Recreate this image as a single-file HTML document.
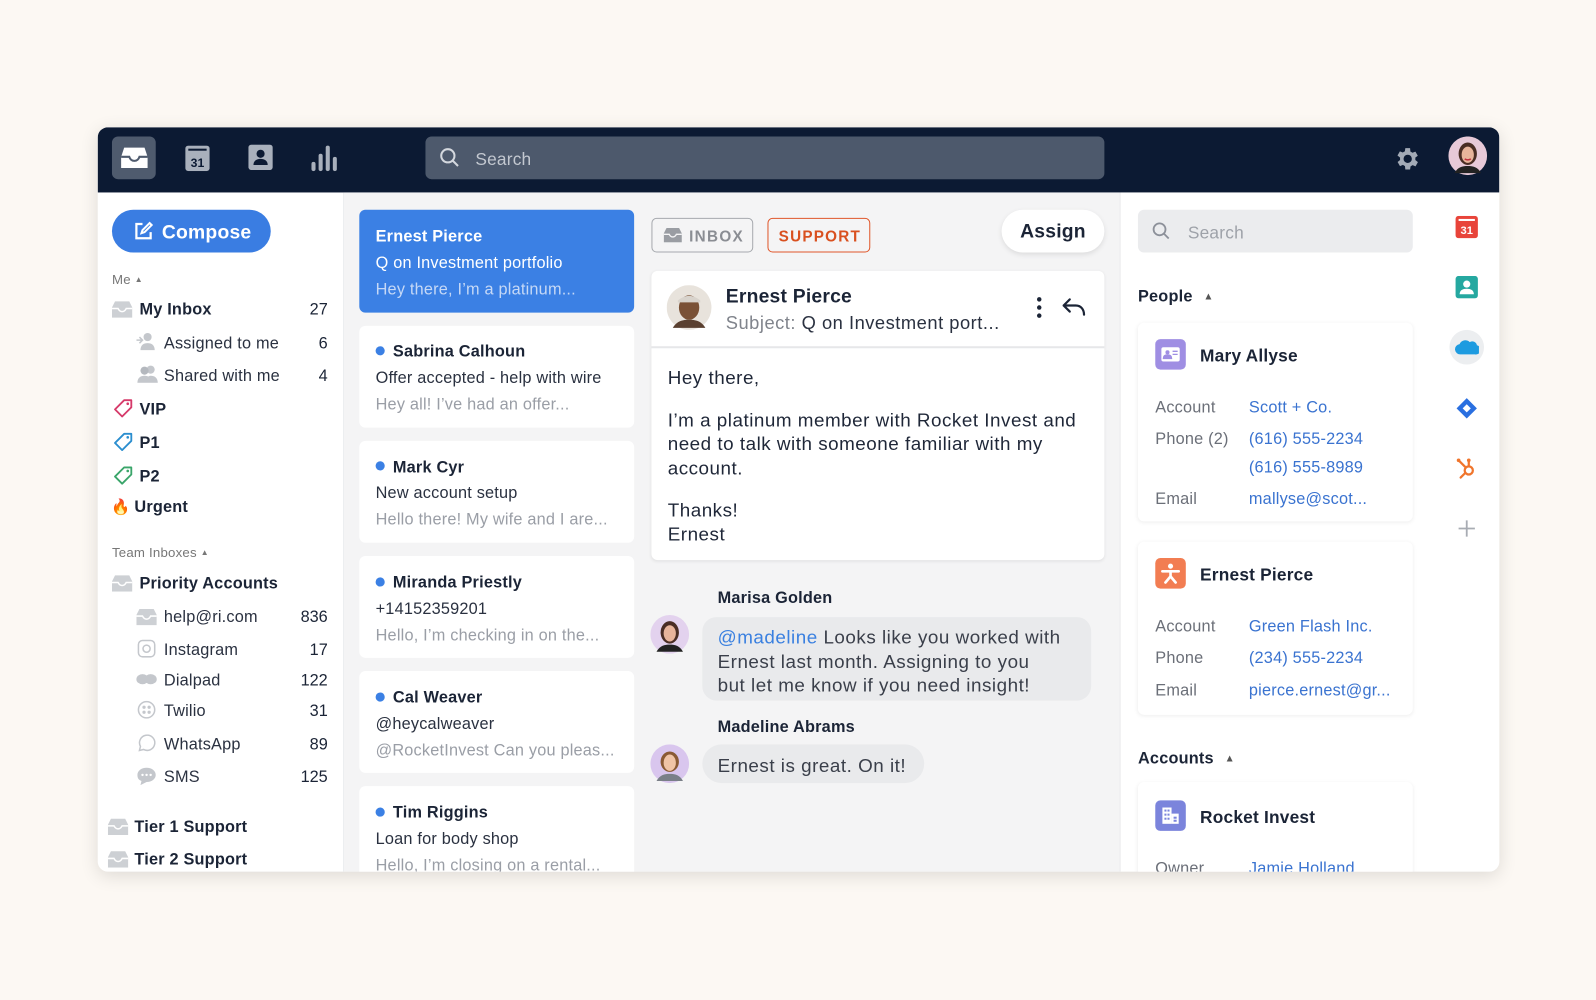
<!DOCTYPE html>
<html><head><meta charset="utf-8"><style>
*{margin:0;padding:0;box-sizing:border-box}
html,body{width:1596px;height:1000px;overflow:hidden;background:#fcf8f3;font-family:"Liberation Sans",Arial,sans-serif;color:#1b2436}
#s{position:absolute;left:0;top:0;width:1568px;height:982px;transform:scale(1.01786,1.0183);transform-origin:0 0}
.a{position:absolute}
.t{position:absolute;white-space:nowrap;line-height:20px;margin-top:2px;letter-spacing:.2px}
.b{font-weight:bold}
#app{position:absolute;left:96px;top:125px;width:1377px;height:731px;border-radius:10px;overflow:hidden;background:#fff;box-shadow:0 4px 18px rgba(0,0,0,.12)}
.card{position:absolute;background:#fff;border-radius:6px}
.cnt{position:absolute;width:60px;text-align:right;white-space:nowrap;line-height:20px;font-size:16px;margin-top:2px}
.lbl{color:#6b6f78;font-size:16px}
.lnk{color:#3a73d0;font-size:16px}
.big{letter-spacing:.5px}
</style></head><body><div id="s">
<div id="app">
<div class="a" style="left:0;top:0;width:1377px;height:64px;background:#0c1a33"></div>
<div class="a" style="left:14px;top:9px;width:43px;height:42px;background:#4f5b6e;border-radius:6px"></div>
<svg class="a" style="left:22px;top:17px" width="28" height="26" viewBox="0 0 28 26"><path d="M4 3h20l3 9v11H1V12z" fill="#fff"/><path d="M1 12h8c1 3 3 4 5 4s4-1 5-4h8" fill="none" stroke="#4f5b6e" stroke-width="2"/></svg>
<svg class="a" style="left:86px;top:18px" width="24" height="25" viewBox="0 0 24 25"><rect x="0" y="0" width="24" height="25" rx="3" fill="#a9b0bc"/><rect x="3" y="3" width="18" height="2" fill="#0c1a33"/><text x="12" y="21" font-size="12" font-weight="bold" text-anchor="middle" fill="#0c1a33" font-family="Liberation Sans">31</text></svg>
<svg class="a" style="left:148px;top:17px" width="24" height="25" viewBox="0 0 24 25"><rect width="24" height="25" rx="3" fill="#a9b0bc"/><circle cx="12" cy="9" r="4" fill="#0c1a33"/><path d="M5 20c0-4 3-6 7-6s7 2 7 6z" fill="#0c1a33"/></svg>
<svg class="a" style="left:209px;top:16px" width="26" height="28" viewBox="0 0 26 28"><g fill="#a9b0bc"><rect x="1" y="18" width="4" height="9" rx="2"/><rect x="8" y="10" width="4" height="17" rx="2"/><rect x="15" y="2" width="4" height="25" rx="2"/><rect x="22" y="13" width="4" height="14" rx="2"/></g></svg>
<div class="a" style="left:322px;top:9px;width:667px;height:42px;background:#4d596c;border-radius:6px"></div>
<svg class="a" style="left:336px;top:20px" width="20" height="20" viewBox="0 0 20 20"><circle cx="8" cy="8" r="6.5" fill="none" stroke="#d4d8de" stroke-width="2"/><path d="M13 13l5 5" stroke="#d4d8de" stroke-width="2"/></svg>
<div class="t" style="left:371px;top:20px;font-size:17px;color:#c3c8d0">Search</div>
<svg class="a" style="left:1273px;top:17px" width="28" height="28" viewBox="0 0 24 24"><path fill="#a3aab6" d="M19.4 13a7.5 7.5 0 000-2l2.1-1.6-2-3.5-2.5 1a7 7 0 00-1.7-1L15 3h-4l-.4 2.7a7 7 0 00-1.7 1l-2.5-1-2 3.5L6.6 11a7.5 7.5 0 000 2l-2.1 1.6 2 3.5 2.5-1a7 7 0 001.7 1L11 21h4l.4-2.7a7 7 0 001.7-1l2.5 1 2-3.5zM13 15.5a3.5 3.5 0 110-7 3.5 3.5 0 010 7z" transform="translate(-1 0)"/></svg>
<svg class="a" style="left:1327px;top:9px" width="38" height="38" viewBox="0 0 38 38"><circle cx="19" cy="19" r="19" fill="#e7c9d8"/><ellipse cx="19" cy="17" rx="9" ry="11" fill="#4a2d24"/><ellipse cx="19" cy="18" rx="6" ry="8" fill="#e8b49b"/><path d="M6 36c3-6 8-7 13-7s10 1 13 7z" fill="#222"/><path d="M16 22q3 2 6 0" stroke="#c03040" stroke-width="1.5" fill="none"/></svg>

<div class="a" style="left:241px;top:64px;width:1px;height:667px;background:#eceef0"></div>
<div class="a" style="left:14px;top:81px;width:156px;height:42px;background:#3a7de2;border-radius:21px"></div>
<svg class="a" style="left:35px;top:92px" width="20" height="20" viewBox="0 0 20 20"><path d="M9 3H3v14h14v-6" fill="none" stroke="#fff" stroke-width="2.2"/><path d="M8 12l1-3 7-7 2 2-7 7z" fill="none" stroke="#fff" stroke-width="2"/></svg>
<div class="t b" style="left:63px;top:92px;font-size:19px;color:#fff">Compose</div>
<div class="t" style="left:14px;top:138px;font-size:13px;color:#777">Me <span style="font-size:8px;vertical-align:2px">▲</span></div>
<svg class="a" style="left:14px;top:170px" width="20" height="17" viewBox="0 0 20 17"><path d="M3 1h14l3 6v10H0V7z" fill="#cdd0d4"/><path d="M0 8h6c1 2 2 3 4 3s3-1 4-3h6" fill="none" stroke="#fff" stroke-width="1.5"/></svg>
<div class="t b" style="left:41px;top:168px;font-size:16px">My Inbox</div><div class="cnt" style="left:166px;top:168px">27</div>
<svg class="a" style="left:38px;top:201px" width="20" height="18" viewBox="0 0 20 18"><circle cx="11" cy="5" r="4" fill="#c4c7cc"/><path d="M4 18c0-5 3-7 7-7s7 2 7 7z" fill="#c4c7cc"/><path d="M0 8h5M3 5l3 3-3 3" stroke="#c4c7cc" fill="none" stroke-width="1.5"/></svg>
<div class="t" style="left:65px;top:201px;font-size:16px;color:#2a3140">Assigned to me</div><div class="cnt" style="left:166px;top:201px">6</div>
<svg class="a" style="left:38px;top:233px" width="22" height="18" viewBox="0 0 22 18"><circle cx="14" cy="5" r="4" fill="#c4c7cc"/><circle cx="8" cy="6" r="4" fill="#b4b8be"/><path d="M1 18c0-5 3-7 7-7s7 2 7 7zM9 18c0-5 3-7 5-7 4 0 7 2 7 7z" fill="#c4c7cc"/></svg>
<div class="t" style="left:65px;top:233px;font-size:16px;color:#2a3140">Shared with me</div><div class="cnt" style="left:166px;top:233px">4</div>
<svg class="a" style="left:15px;top:266px" width="20" height="20" viewBox="0 0 20 20"><path d="M11 2h7v7l-9 9-7-7z" fill="none" stroke="#d63a6a" stroke-width="1.8" stroke-linejoin="round"/><circle cx="14.5" cy="5.5" r="1.3" fill="#d63a6a"/></svg>
<div class="t b" style="left:41px;top:266px;font-size:16px">VIP</div>
<svg class="a" style="left:15px;top:299px" width="20" height="20" viewBox="0 0 20 20"><path d="M11 2h7v7l-9 9-7-7z" fill="none" stroke="#2b8ecf" stroke-width="1.8" stroke-linejoin="round"/><circle cx="14.5" cy="5.5" r="1.3" fill="#2b8ecf"/></svg>
<div class="t b" style="left:41px;top:299px;font-size:16px">P1</div>
<svg class="a" style="left:15px;top:332px" width="20" height="20" viewBox="0 0 20 20"><path d="M11 2h7v7l-9 9-7-7z" fill="none" stroke="#3aa56a" stroke-width="1.8" stroke-linejoin="round"/><circle cx="14.5" cy="5.5" r="1.3" fill="#3aa56a"/></svg>
<div class="t b" style="left:41px;top:332px;font-size:16px">P2</div>
<div class="t" style="left:13px;top:362px;font-size:15px;color:#f06a1a">🔥</div>
<div class="t b" style="left:36px;top:362px;font-size:16px">Urgent</div>
<div class="t" style="left:14px;top:406px;font-size:13px;color:#777">Team Inboxes <span style="font-size:8px;vertical-align:2px">▲</span></div>
<svg class="a" style="left:14px;top:439px" width="20" height="17" viewBox="0 0 20 17"><path d="M3 1h14l3 6v10H0V7z" fill="#cdd0d4"/><path d="M0 8h6c1 2 2 3 4 3s3-1 4-3h6" fill="none" stroke="#fff" stroke-width="1.5"/></svg>
<div class="t b" style="left:41px;top:437px;font-size:16px">Priority Accounts</div>
<svg class="a" style="left:38px;top:472px" width="20" height="17" viewBox="0 0 20 17"><path d="M3 1h14l3 6v10H0V7z" fill="#cdd0d4"/><path d="M0 8h6c1 2 2 3 4 3s3-1 4-3h6" fill="none" stroke="#fff" stroke-width="1.5"/></svg>
<div class="t" style="left:65px;top:470px;font-size:16px;color:#2a3140">help@ri.com</div><div class="cnt" style="left:166px;top:470px">836</div>
<svg class="a" style="left:39px;top:503px" width="18" height="18" viewBox="0 0 18 18"><rect x="1" y="1" width="16" height="16" rx="4" fill="none" stroke="#c4c7cc" stroke-width="1.5"/><circle cx="9" cy="9" r="3.5" fill="none" stroke="#c4c7cc" stroke-width="1.5"/></svg>
<div class="t" style="left:65px;top:502px;font-size:16px;color:#2a3140">Instagram</div><div class="cnt" style="left:166px;top:502px">17</div>
<svg class="a" style="left:37px;top:535px" width="22" height="14" viewBox="0 0 22 14"><ellipse cx="7" cy="7" rx="6" ry="5" fill="#c4c7cc"/><ellipse cx="15" cy="7" rx="6" ry="5" fill="#c4c7cc"/></svg>
<div class="t" style="left:65px;top:532px;font-size:16px;color:#2a3140">Dialpad</div><div class="cnt" style="left:166px;top:532px">122</div>
<svg class="a" style="left:39px;top:563px" width="18" height="18" viewBox="0 0 18 18"><circle cx="9" cy="9" r="8" fill="none" stroke="#c4c7cc" stroke-width="1.5"/><g fill="#c4c7cc"><circle cx="6.5" cy="6.5" r="1.6"/><circle cx="11.5" cy="6.5" r="1.6"/><circle cx="6.5" cy="11.5" r="1.6"/><circle cx="11.5" cy="11.5" r="1.6"/></g></svg>
<div class="t" style="left:65px;top:562px;font-size:16px;color:#2a3140">Twilio</div><div class="cnt" style="left:166px;top:562px">31</div>
<svg class="a" style="left:39px;top:596px" width="18" height="18" viewBox="0 0 18 18"><path d="M2 16l1-4a7.5 7.5 0 113 3z" fill="none" stroke="#c4c7cc" stroke-width="1.5"/></svg>
<div class="t" style="left:65px;top:595px;font-size:16px;color:#2a3140">WhatsApp</div><div class="cnt" style="left:166px;top:595px">89</div>
<svg class="a" style="left:38px;top:628px" width="20" height="18" viewBox="0 0 20 18"><path d="M10 1c5 0 9 3 9 7s-4 7-9 7l-6 3 1-4c-3-1-4-3-4-6 0-4 4-7 9-7z" fill="#c4c7cc"/><g fill="#fff"><circle cx="6" cy="8" r="1.2"/><circle cx="10" cy="8" r="1.2"/><circle cx="14" cy="8" r="1.2"/></g></svg>
<div class="t" style="left:65px;top:627px;font-size:16px;color:#2a3140">SMS</div><div class="cnt" style="left:166px;top:627px">125</div>
<svg class="a" style="left:10px;top:678px" width="20" height="17" viewBox="0 0 20 17"><path d="M3 1h14l3 6v10H0V7z" fill="#cdd0d4"/><path d="M0 8h6c1 2 2 3 4 3s3-1 4-3h6" fill="none" stroke="#fff" stroke-width="1.5"/></svg>
<div class="t b" style="left:36px;top:676px;font-size:16px">Tier 1 Support</div>
<svg class="a" style="left:10px;top:710px" width="20" height="17" viewBox="0 0 20 17"><path d="M3 1h14l3 6v10H0V7z" fill="#cdd0d4"/><path d="M0 8h6c1 2 2 3 4 3s3-1 4-3h6" fill="none" stroke="#fff" stroke-width="1.5"/></svg>
<div class="t b" style="left:36px;top:708px;font-size:16px">Tier 2 Support</div>

<div class="a" style="left:242px;top:64px;width:762px;height:667px;background:#f4f4f5"></div>
<div class="a" style="left:1004px;top:64px;width:1px;height:667px;background:#e6e7e9"></div>
<div class="card" style="left:257px;top:81px;width:270px;height:101px;background:#3b80e4"></div>
<div class="t b" style="left:273px;top:96px;font-size:16px;color:#fff">Ernest Pierce</div>
<div class="t" style="left:273px;top:122px;font-size:16px;color:#fff">Q on Investment portfolio</div>
<div class="t" style="left:273px;top:148px;font-size:16px;color:#c5d8f6">Hey there, I’m a platinum...</div>

<div class="card" style="left:257px;top:195px;width:270px;height:100px"></div>
<div class="a" style="left:273px;top:215px;width:9px;height:9px;border-radius:50%;background:#3b80e4"></div>
<div class="t b" style="left:290px;top:209px;font-size:16px">Sabrina Calhoun</div>
<div class="t" style="left:273px;top:235px;font-size:16px;color:#2a3140">Offer accepted - help with wire</div>
<div class="t" style="left:273px;top:261px;font-size:16px;color:#9a9ea6">Hey all! I’ve had an offer...</div>

<div class="card" style="left:257px;top:308px;width:270px;height:100px"></div>
<div class="a" style="left:273px;top:328px;width:9px;height:9px;border-radius:50%;background:#3b80e4"></div>
<div class="t b" style="left:290px;top:323px;font-size:16px">Mark Cyr</div>
<div class="t" style="left:273px;top:348px;font-size:16px;color:#2a3140">New account setup</div>
<div class="t" style="left:273px;top:374px;font-size:16px;color:#9a9ea6">Hello there! My wife and I are...</div>

<div class="card" style="left:257px;top:421px;width:270px;height:100px"></div>
<div class="a" style="left:273px;top:442px;width:9px;height:9px;border-radius:50%;background:#3b80e4"></div>
<div class="t b" style="left:290px;top:436px;font-size:16px">Miranda Priestly</div>
<div class="t" style="left:273px;top:462px;font-size:16px;color:#2a3140">+14152359201</div>
<div class="t" style="left:273px;top:488px;font-size:16px;color:#9a9ea6">Hello, I’m checking in on the...</div>

<div class="card" style="left:257px;top:534px;width:270px;height:100px"></div>
<div class="a" style="left:273px;top:555px;width:9px;height:9px;border-radius:50%;background:#3b80e4"></div>
<div class="t b" style="left:290px;top:549px;font-size:16px">Cal Weaver</div>
<div class="t" style="left:273px;top:575px;font-size:16px;color:#2a3140">@heycalweaver</div>
<div class="t" style="left:273px;top:601px;font-size:16px;color:#9a9ea6">@RocketInvest Can you pleas...</div>

<div class="card" style="left:257px;top:647px;width:270px;height:100px"></div>
<div class="a" style="left:273px;top:668px;width:9px;height:9px;border-radius:50%;background:#3b80e4"></div>
<div class="t b" style="left:290px;top:662px;font-size:16px">Tim Riggins</div>
<div class="t" style="left:273px;top:688px;font-size:16px;color:#2a3140">Loan for body shop</div>
<div class="t" style="left:273px;top:714px;font-size:16px;color:#9a9ea6">Hello, I’m closing on a rental...</div>

<div class="a" style="left:544px;top:89px;width:100px;height:34px;border:1.5px solid #a6a9ae;border-radius:5px"></div>
<svg class="a" style="left:556px;top:98px" width="18" height="15" viewBox="0 0 20 17"><path d="M3 1h14l3 6v10H0V7z" fill="#9a9da3"/><path d="M0 8h6c1 2 2 3 4 3s3-1 4-3h6" fill="none" stroke="#f4f4f5" stroke-width="1.5"/></svg>
<div class="t b" style="left:581px;top:96px;font-size:15px;color:#8a8d93;letter-spacing:1.3px">INBOX</div>
<div class="a" style="left:658px;top:89px;width:101px;height:34px;border:1.5px solid #e0562a;border-radius:5px"></div>
<div class="t b" style="left:669px;top:96px;font-size:15px;color:#d9501f;letter-spacing:1.2px">SUPPORT</div>
<div class="a" style="left:888px;top:81px;width:101px;height:42px;border-radius:21px;background:#fff;box-shadow:0 2px 5px rgba(0,0,0,.1)"></div>
<div class="t b" style="left:888px;top:91px;width:101px;text-align:center;font-size:19px">Assign</div>

<div class="card" style="left:544px;top:141px;width:445px;height:284px;box-shadow:0 1px 3px rgba(0,0,0,.08)"></div>
<div class="a" style="left:544px;top:215px;width:445px;height:1.5px;background:#e6e7e9"></div>
<svg class="a" style="left:559px;top:155px" width="44" height="44" viewBox="0 0 44 44"><circle cx="22" cy="22" r="22" fill="#e8e3dc"/><ellipse cx="22" cy="22" rx="10" ry="12" fill="#7a5136"/><path d="M11 15q11-9 22 0v2H11z" fill="#d8d3cc"/><path d="M6 42c4-7 10-8 16-8s12 1 16 8z" fill="#5a4030"/></svg>
<div class="t b" style="left:617px;top:155px;font-size:19px">Ernest Pierce</div>
<div class="t big" style="left:617px;top:180px;font-size:18px;color:#2a3140"><span style="color:#80848c">Subject:</span> Q on Investment port...</div>
<svg class="a" style="left:921px;top:166px" width="8" height="22" viewBox="0 0 8 22"><g fill="#1b2436"><circle cx="4" cy="3" r="2.2"/><circle cx="4" cy="11" r="2.2"/><circle cx="4" cy="19" r="2.2"/></g></svg>
<svg class="a" style="left:947px;top:167px" width="24" height="20" viewBox="0 0 24 20"><path d="M8 2L2 8l6 6M2 8h12c5 0 8 4 8 9" fill="none" stroke="#1b2436" stroke-width="2.2" stroke-linecap="round" stroke-linejoin="round"/></svg>
<div class="a big" style="left:560px;top:234px;font-size:18.5px;line-height:23.5px;color:#1f2738;white-space:nowrap">Hey there,<br><div style="height:18px"></div>I’m a platinum member with Rocket Invest and<br>need to talk with someone familiar with my<br>account.<br><div style="height:18px"></div>Thanks!<br>Ernest</div>

<div class="t b" style="left:609px;top:451px;font-size:16px">Marisa Golden</div>
<svg class="a" style="left:543px;top:479px" width="38" height="38" viewBox="0 0 38 38"><circle cx="19" cy="19" r="19" fill="#e3d2ee"/><ellipse cx="19" cy="17" rx="9" ry="11" fill="#4a2d24"/><ellipse cx="19" cy="18" rx="6" ry="8" fill="#e8b49b"/><path d="M6 36c3-6 8-7 13-7s10 1 13 7z" fill="#222"/></svg>
<div class="a" style="left:594px;top:481px;width:382px;height:82px;border-radius:14px;background:#e9eaec"></div>
<div class="a big" style="left:609px;top:489px;font-size:18.5px;line-height:23.5px;color:#3a3f4a;white-space:nowrap"><span style="color:#3a80e0">@madeline</span> Looks like you worked with<br>Ernest last month. Assigning to you<br>but let me know if you need insight!</div>
<div class="t b" style="left:609px;top:578px;font-size:16px">Madeline Abrams</div>
<svg class="a" style="left:543px;top:606px" width="38" height="38" viewBox="0 0 38 38"><circle cx="19" cy="19" r="19" fill="#d9c6ee"/><ellipse cx="19" cy="17" rx="9" ry="10" fill="#8a5a34"/><ellipse cx="19" cy="18" rx="6" ry="8" fill="#f0c4a6"/><path d="M6 36c3-6 8-7 13-7s10 1 13 7z" fill="#7a7f88"/></svg>
<div class="a" style="left:594px;top:606px;width:218px;height:38px;border-radius:19px;background:#e9eaec"></div>
<div class="t big" style="left:609px;top:615px;font-size:18.5px;color:#3a3f4a">Ernest is great. On it!</div>

<div class="a" style="left:1005px;top:64px;width:372px;height:667px;background:#fff"></div>
<div class="a" style="left:1022px;top:81px;width:270px;height:42px;background:#ebecee;border-radius:6px"></div>
<svg class="a" style="left:1036px;top:93px" width="18" height="18" viewBox="0 0 20 20"><circle cx="8" cy="8" r="6.5" fill="none" stroke="#8c9099" stroke-width="2"/><path d="M13 13l5 5" stroke="#8c9099" stroke-width="2"/></svg>
<div class="t" style="left:1071px;top:92px;font-size:17px;color:#9ea2a9">Search</div>
<div class="t b" style="left:1022px;top:155px;font-size:16px">People <span style="font-size:10px;color:#555;margin-left:6px;vertical-align:2px">▲</span></div>
<div class="card" style="left:1022px;top:192px;width:270px;height:195px;box-shadow:0 1px 4px rgba(0,0,0,.07)"></div>
<div class="a" style="left:1039px;top:208px;width:30px;height:30px;border-radius:5px;background:#9f8ee3"></div>
<svg class="a" style="left:1044px;top:215px" width="20" height="16" viewBox="0 0 20 16"><rect x="1" y="1" width="18" height="14" rx="2" fill="#fff"/><circle cx="7" cy="6" r="2" fill="#9f8ee3"/><path d="M3 12c0-3 2-3.5 4-3.5s4 .5 4 3.5z M12 5h5M12 8h5" fill="#9f8ee3" stroke="#9f8ee3" stroke-width="1.3"/></svg>
<div class="t b" style="left:1083px;top:213px;font-size:17px">Mary Allyse</div>
<div class="t lbl" style="left:1039px;top:264px">Account</div><div class="t lnk" style="left:1131px;top:264px">Scott + Co.</div>
<div class="t lbl" style="left:1039px;top:295px">Phone (2)</div><div class="t lnk" style="left:1131px;top:295px">(616) 555-2234</div>
<div class="t lnk" style="left:1131px;top:323px">(616) 555-8989</div>
<div class="t lbl" style="left:1039px;top:354px">Email</div><div class="t lnk" style="left:1131px;top:354px">mallyse@scot...</div>

<div class="card" style="left:1022px;top:407px;width:270px;height:170px;box-shadow:0 1px 4px rgba(0,0,0,.07)"></div>
<div class="a" style="left:1039px;top:423px;width:30px;height:30px;border-radius:5px;background:#f27d52"></div>
<svg class="a" style="left:1044px;top:427px" width="20" height="22" viewBox="0 0 20 22"><circle cx="10" cy="4" r="2.5" fill="#fff"/><path d="M2 9h16M10 9v5l-5 6M10 14l5 6" stroke="#fff" stroke-width="2.6" fill="none" stroke-linecap="round"/></svg>
<div class="t b" style="left:1083px;top:428px;font-size:17px">Ernest Pierce</div>
<div class="t lbl" style="left:1039px;top:479px">Account</div><div class="t lnk" style="left:1131px;top:479px">Green Flash Inc.</div>
<div class="t lbl" style="left:1039px;top:510px">Phone</div><div class="t lnk" style="left:1131px;top:510px">(234) 555-2234</div>
<div class="t lbl" style="left:1039px;top:542px">Email</div><div class="t lnk" style="left:1131px;top:542px">pierce.ernest@gr...</div>

<div class="t b" style="left:1022px;top:609px;font-size:16px">Accounts <span style="font-size:10px;color:#555;margin-left:6px;vertical-align:2px">▲</span></div>
<div class="card" style="left:1022px;top:643px;width:270px;height:120px;box-shadow:0 1px 4px rgba(0,0,0,.07)"></div>
<div class="a" style="left:1039px;top:661px;width:30px;height:30px;border-radius:5px;background:#7b84dc"></div>
<svg class="a" style="left:1045px;top:667px" width="18" height="18" viewBox="0 0 18 18"><rect x="1" y="1" width="9" height="16" fill="#fff"/><rect x="10" y="7" width="7" height="10" fill="#fff"/><g fill="#7b84dc"><rect x="3" y="3" width="2" height="2"/><rect x="6" y="3" width="2" height="2"/><rect x="3" y="7" width="2" height="2"/><rect x="6" y="7" width="2" height="2"/><rect x="3" y="11" width="2" height="2"/><rect x="6" y="11" width="2" height="2"/><rect x="12" y="10" width="3" height="2"/><rect x="12" y="13" width="3" height="2"/></g></svg>
<div class="t b" style="left:1083px;top:666px;font-size:17px">Rocket Invest</div>
<div class="t lbl" style="left:1039px;top:717px">Owner</div><div class="t lnk" style="left:1131px;top:717px">Jamie Holland</div>

<svg class="a" style="left:1334px;top:87px" width="22" height="22" viewBox="0 0 22 22"><rect width="22" height="22" rx="3" fill="#e8443a"/><rect x="3" y="3" width="16" height="2" fill="#fff"/><text x="11" y="18" font-size="11" font-weight="bold" text-anchor="middle" fill="#fff" font-family="Liberation Sans">31</text></svg>
<svg class="a" style="left:1334px;top:146px" width="22" height="22" viewBox="0 0 22 22"><rect width="22" height="22" rx="3" fill="#25a8a0"/><circle cx="11" cy="8" r="3.5" fill="#fff"/><path d="M4 18c0-4 3-5.5 7-5.5s7 1.5 7 5.5z" fill="#fff"/></svg>
<div class="a" style="left:1328px;top:199px;width:34px;height:34px;border-radius:50%;background:#eceef0"></div>
<svg class="a" style="left:1333px;top:208px" width="24" height="16" viewBox="0 0 24 16"><path d="M6 15a5 5 0 01-1-10 6 6 0 0110-2 4.5 4.5 0 017 3 4.5 4.5 0 01-2 9z" fill="#1d9be0"/></svg>
<svg class="a" style="left:1334px;top:265px" width="22" height="22" viewBox="0 0 22 22"><path d="M11 1l10 10-10 10L1 11z" fill="#2a6fe0"/><path d="M11 7l4 4-4 4-4-4z" fill="#fff"/></svg>
<svg class="a" style="left:1334px;top:324px" width="22" height="22" viewBox="0 0 22 22"><g stroke="#f0752c" stroke-width="2.2" fill="none" stroke-linecap="round"><circle cx="13" cy="13" r="4"/><path d="M13 9V4M3 3l7 7M9 16l-4 4"/></g><circle cx="13" cy="3" r="1.8" fill="#f0752c"/><circle cx="3" cy="3" r="1.8" fill="#f0752c"/></svg>
<svg class="a" style="left:1336px;top:385px" width="18" height="18" viewBox="0 0 18 18"><path d="M9 1v16M1 9h16" stroke="#a8acb3" stroke-width="1.8"/></svg>
</div>
</div></body></html>
